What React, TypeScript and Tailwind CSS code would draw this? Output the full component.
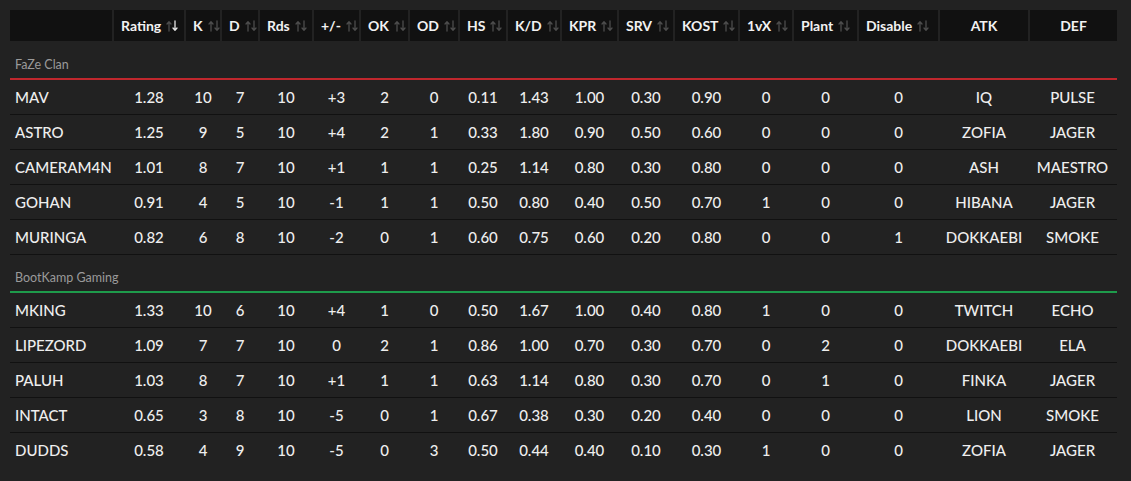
import React from 'react'

type Col = { key: string; label: string; sortable: boolean; center?: boolean }

const columns: Col[] = [
  { key: 'rating', label: 'Rating', sortable: true },
  { key: 'k', label: 'K', sortable: true },
  { key: 'd', label: 'D', sortable: true },
  { key: 'rds', label: 'Rds', sortable: true },
  { key: 'pm', label: '+/-', sortable: true },
  { key: 'ok', label: 'OK', sortable: true },
  { key: 'od', label: 'OD', sortable: true },
  { key: 'hs', label: 'HS', sortable: true },
  { key: 'kd', label: 'K/D', sortable: true },
  { key: 'kpr', label: 'KPR', sortable: true },
  { key: 'srv', label: 'SRV', sortable: true },
  { key: 'kost', label: 'KOST', sortable: true },
  { key: 'onevx', label: '1vX', sortable: true },
  { key: 'plant', label: 'Plant', sortable: true },
  { key: 'disable', label: 'Disable', sortable: true },
  { key: 'atk', label: 'ATK', sortable: false, center: true },
  { key: 'def', label: 'DEF', sortable: false, center: true },
]

const teams = [
  {
    name: 'FaZe Clan',
    line: 'border-[#c0272d]',
    players: [
      ['MAV', '1.28', '10', '7', '10', '+3', '2', '0', '0.11', '1.43', '1.00', '0.30', '0.90', '0', '0', '0', 'IQ', 'PULSE'],
      ['ASTRO', '1.25', '9', '5', '10', '+4', '2', '1', '0.33', '1.80', '0.90', '0.50', '0.60', '0', '0', '0', 'ZOFIA', 'JAGER'],
      ['CAMERAM4N', '1.01', '8', '7', '10', '+1', '1', '1', '0.25', '1.14', '0.80', '0.30', '0.80', '0', '0', '0', 'ASH', 'MAESTRO'],
      ['GOHAN', '0.91', '4', '5', '10', '-1', '1', '1', '0.50', '0.80', '0.40', '0.50', '0.70', '1', '0', '0', 'HIBANA', 'JAGER'],
      ['MURINGA', '0.82', '6', '8', '10', '-2', '0', '1', '0.60', '0.75', '0.60', '0.20', '0.80', '0', '0', '1', 'DOKKAEBI', 'SMOKE'],
    ],
  },
  {
    name: 'BootKamp Gaming',
    line: 'border-[#1e9b4b]',
    players: [
      ['MKING', '1.33', '10', '6', '10', '+4', '1', '0', '0.50', '1.67', '1.00', '0.40', '0.80', '1', '0', '0', 'TWITCH', 'ECHO'],
      ['LIPEZORD', '1.09', '7', '7', '10', '0', '2', '1', '0.86', '1.00', '0.70', '0.30', '0.70', '0', '2', '0', 'DOKKAEBI', 'ELA'],
      ['PALUH', '1.03', '8', '7', '10', '+1', '1', '1', '0.63', '1.14', '0.80', '0.30', '0.70', '0', '1', '0', 'FINKA', 'JAGER'],
      ['INTACT', '0.65', '3', '8', '10', '-5', '0', '1', '0.67', '0.38', '0.30', '0.20', '0.40', '0', '0', '0', 'LION', 'SMOKE'],
      ['DUDDS', '0.58', '4', '9', '10', '-5', '0', '3', '0.50', '0.44', '0.40', '0.10', '0.30', '1', '0', '0', 'ZOFIA', 'JAGER'],
    ],
  },
]

const gridCols =
  'grid grid-cols-[104px_72px_36px_38px_54px_47px_49px_50px_48px_54px_57px_56px_65px_54px_65px_81px_90px_87px]'

const SortIcon: React.FC<{ active?: boolean }> = ({ active }) => (
  <svg width="12" height="12" viewBox="0 0 12 12" className="ml-[5px] shrink-0">
    <g fill="none" strokeWidth="1.3" strokeLinecap="round" strokeLinejoin="round">
      <path d="M3 11V2M1 4l2-2.3L5 4" stroke="#4d4d4d" />
      <path d="M9 1v9M7 8l2 2.3L11 8" stroke={active ? '#e6e6e6' : '#4d4d4d'} />
    </g>
  </svg>
)

export default function App() {
  return (
    <div
      className="min-h-screen bg-[#222222] pt-[10px] pl-[10px] text-[#eeeeee]"
      style={{ fontFamily: 'Lato, "Open Sans", sans-serif' }}
    >
      <div className="w-[1107px]">
        {/* Header */}
        <div className={`${gridCols} h-[31px] mb-[1px]`}>
          <div className="pr-[2px]">
            <div className="h-full bg-[#111111]" />
          </div>
          {columns.map((col, i) => (
            <div key={col.key} className={i === columns.length - 1 ? '' : 'pr-[2px]'}>
              <div
                className={`h-full bg-[#111111] flex items-center text-[14px] font-bold text-[#f2f2f2] ${
                  col.center ? 'justify-center' : 'pl-[7px]'
                }`}
              >
                <span>{col.label}</span>
                {col.sortable && <SortIcon active={col.key === 'rating'} />}
              </div>
            </div>
          ))}
        </div>

        {teams.map((team) => (
          <div key={team.name}>
            <div className={`h-[38px] flex items-end pb-[6px] pl-[5px] border-b-2 ${team.line}`}>
              <span className="text-[12.5px] leading-[15px] text-[#9a9a9a]">{team.name}</span>
            </div>
            {team.players.map((row, r) => {
              const last = team.name === 'BootKamp Gaming' && r === team.players.length - 1
              return (
                <div
                  key={row[0]}
                  className={`${gridCols} h-[35px] items-center text-[15px] font-medium ${
                    last ? '' : 'border-b border-[#111111]'
                  }`}
                >
                  {row.map((cell, c) => (
                    <div key={c} className={c === 0 ? 'pl-[5px]' : 'pr-[2px] text-center'}>
                      {cell}
                    </div>
                  ))}
                </div>
              )
            })}
          </div>
        ))}
      </div>
    </div>
  )
}
